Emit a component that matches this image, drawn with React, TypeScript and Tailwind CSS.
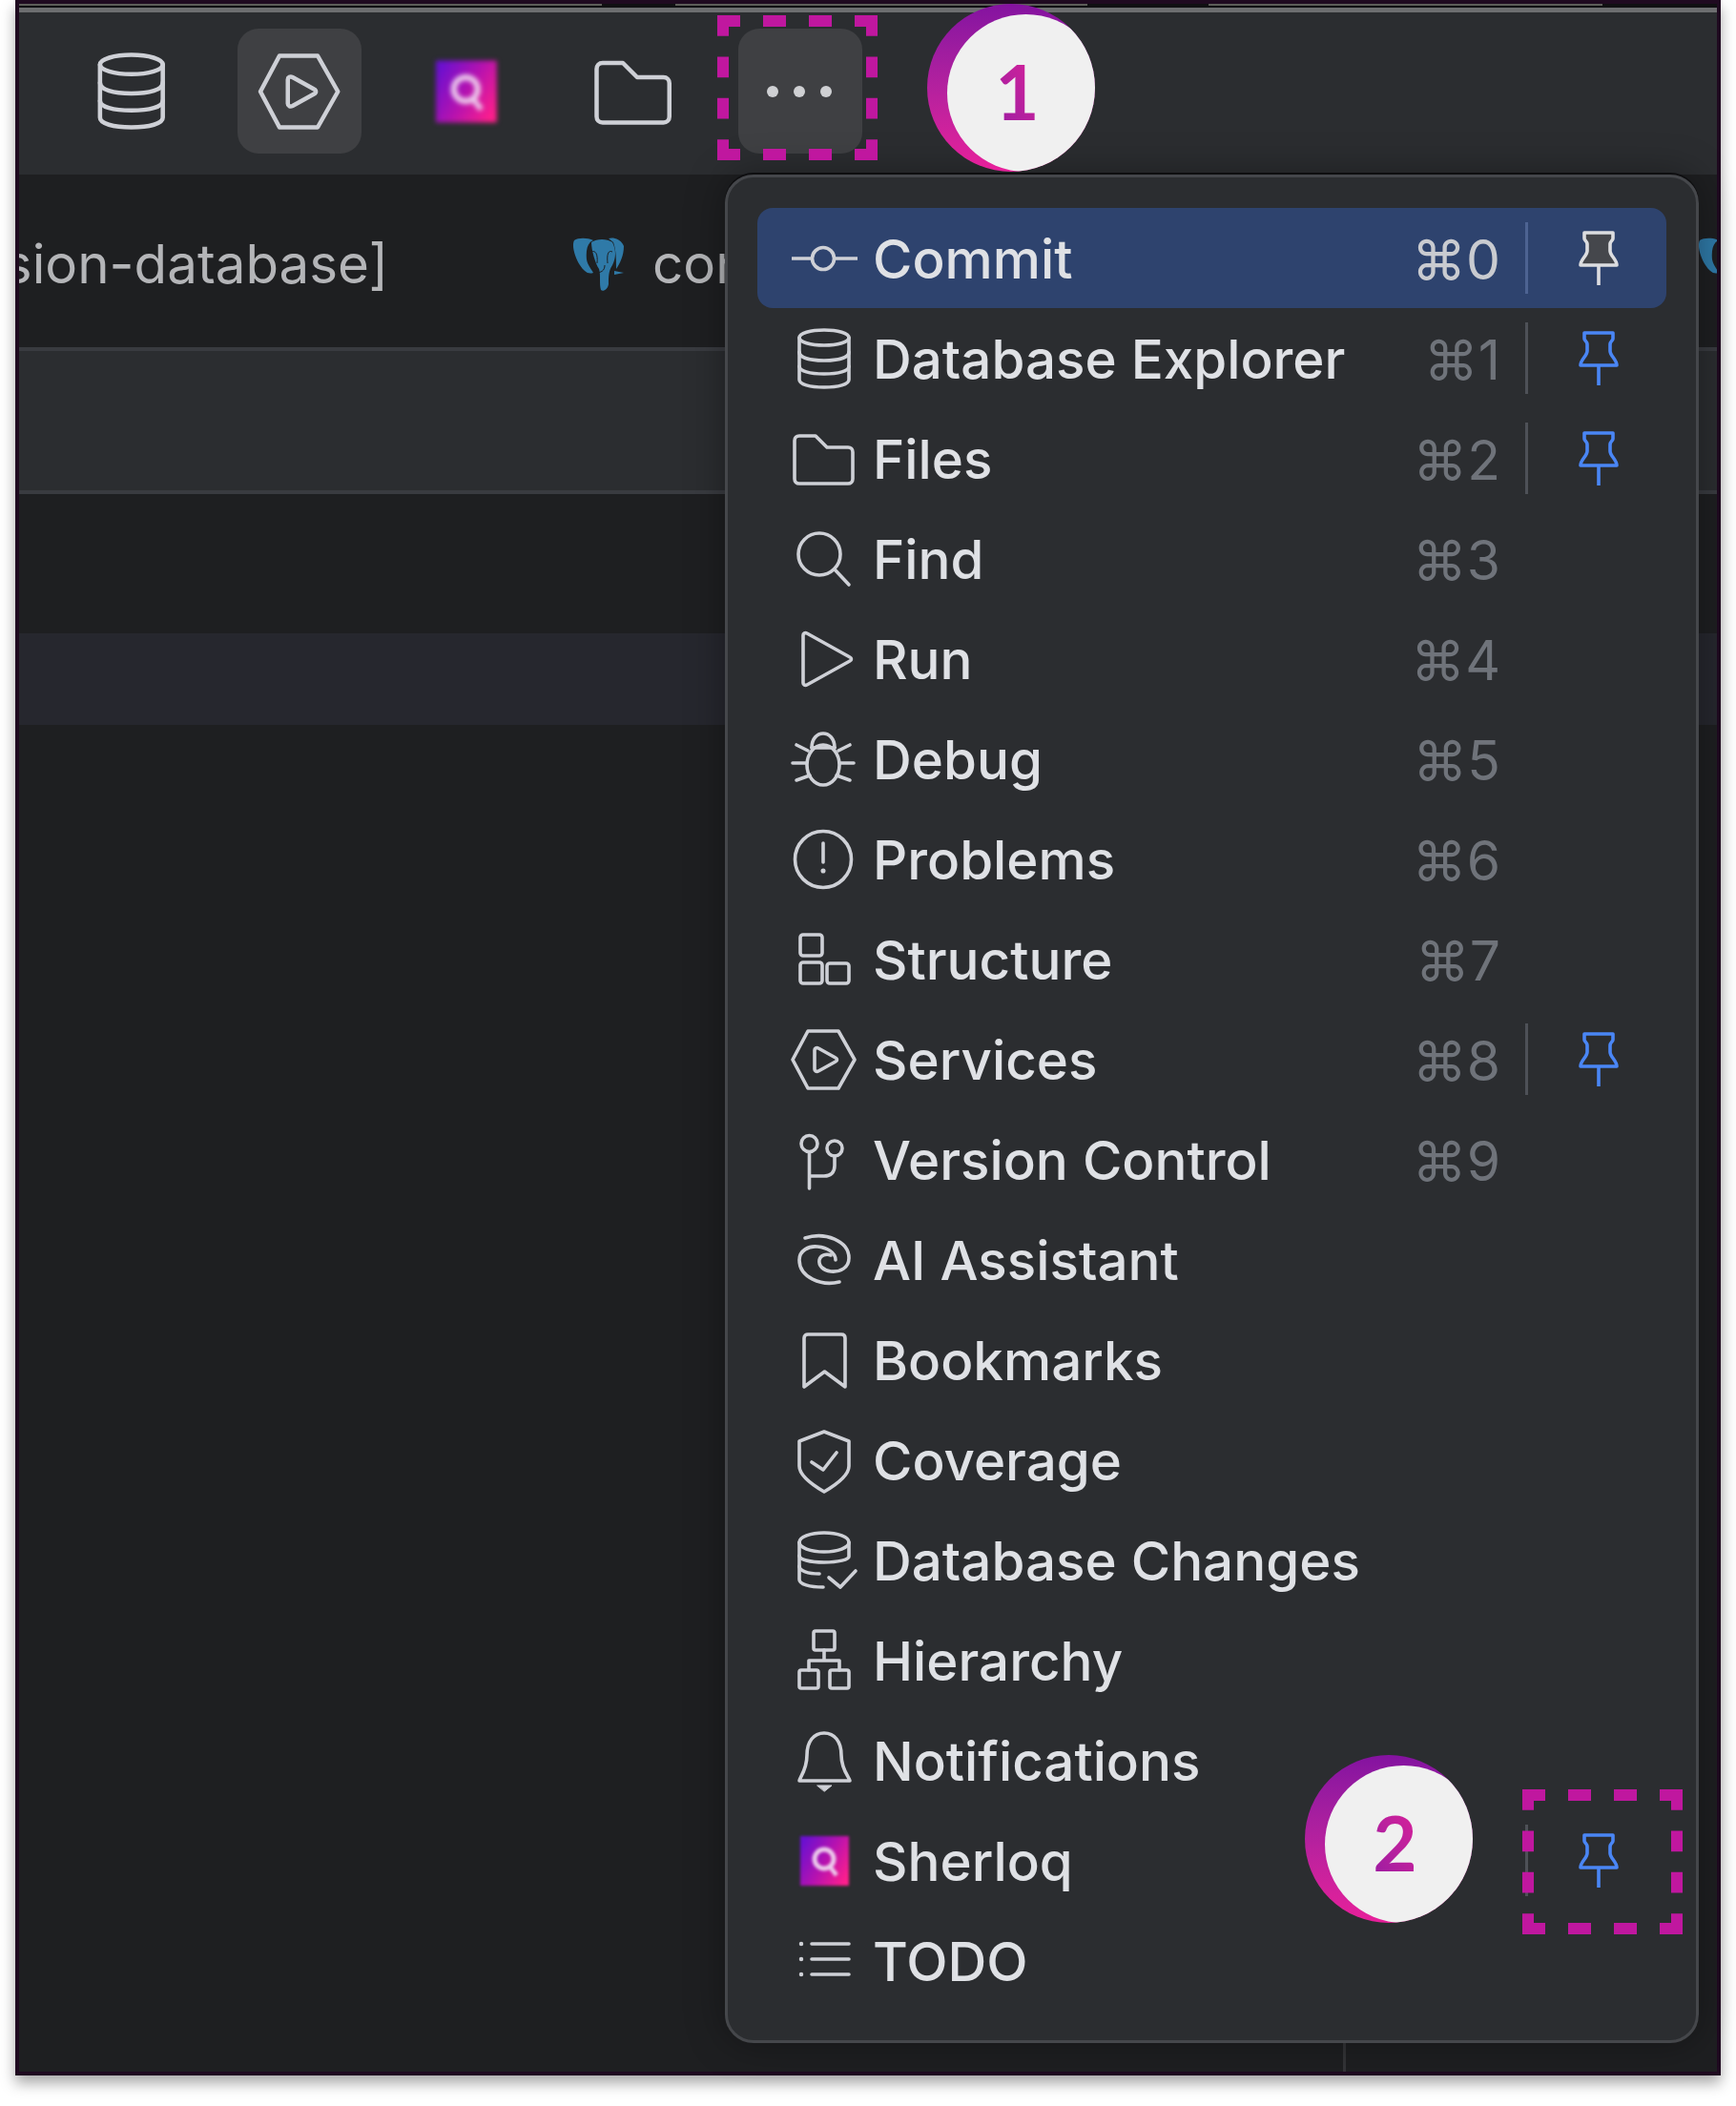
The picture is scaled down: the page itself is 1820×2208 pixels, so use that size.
import React from "react";

const stroke = "#ced0d6";

function Glyph({ children, className = "w-[64px] h-[64px]" }: { children: React.ReactNode; className?: string }) {
  return (
    <svg viewBox="0 0 64 64" fill="none" stroke={stroke} strokeWidth={3.6} strokeLinecap="round" strokeLinejoin="round" overflow="visible" className={className + " shrink-0"}>
      {children}
    </svg>
  );
}

const CommitIcon = () => (
  <Glyph>
    <circle cx="32" cy="32" r="11.5" />
    <path d="M-1 32H20M44 32H68" strokeLinecap="butt" />
  </Glyph>
);
const DbIcon = ({ className }: { className?: string }) => (
  <Glyph className={className}>
    <ellipse cx="33" cy="10" rx="26" ry="8" />
    <path d="M7 10V54C7 59 18 62 33 62C48 62 59 59 59 54V10" />
    <path d="M7 25C7 31 18 34 33 34C48 34 59 31 59 25" />
    <path d="M7 40C7 45 18 48 33 48C48 48 59 45 59 40" />
  </Glyph>
);
const FolderIcon = ({ className }: { className?: string }) => (
  <Glyph className={className}>
    <path d="M2 13C2 10 4 8 7 8H24L36 20H58C61 20 63 22 63 25V53C63 56 61 58 58 58H7C4 58 2 56 2 53Z" />
  </Glyph>
);
const FindIcon = () => (
  <Glyph>
    <circle cx="28" cy="27" r="22" />
    <path d="M44 43L59 59" />
  </Glyph>
);
const RunIcon = () => (
  <Glyph>
    <path d="M11 7C11 5 13 4 15 5L60 30C62 31 62 33 60 34L15 59C13 60 11 59 11 57Z" />
  </Glyph>
);
const DebugIcon = () => (
  <Glyph>
    <ellipse cx="32" cy="38" rx="17" ry="21" />
    <path d="M20 20C20 10 26 5 32 5C38 5 44 10 44 20" />
    <path d="M20 20H44" />
    <path d="M0 36H14M50 36H64M4 17L16 23M60 17L48 23M4 54L18 49M60 54L46 49" />
  </Glyph>
);
const ProblemsIcon = () => (
  <Glyph>
    <circle cx="32" cy="32" r="29.5" />
    <path d="M32 15V35" />
    <circle cx="32" cy="44" r="1.8" fill={stroke} strokeWidth={1.5} />
  </Glyph>
);
const StructureIcon = () => (
  <Glyph>
    <rect x="8" y="6" width="23" height="22" rx="3" />
    <rect x="8" y="35" width="23" height="22" rx="3" />
    <rect x="36" y="36" width="23" height="21" rx="3" />
  </Glyph>
);
const ServicesIcon = ({ className }: { className?: string }) => (
  <Glyph className={className}>
    <path d="M0 32L16 2H48L65 32L48 62H16Z" />
    <path d="M23 22C23 20 25 19 27 20L45 30C47 31 47 33 45 34L27 44C25 45 23 44 23 42Z" />
  </Glyph>
);
const VcsIcon = () => (
  <Glyph>
    <circle cx="17.5" cy="15" r="8.5" />
    <circle cx="44" cy="20" r="8" />
    <path d="M17.5 24V62M44 28V38C44 45 40 49 33 49H17.5" />
  </Glyph>
);
const AiIcon = () => (
  <Glyph>
    <path d="M13 9C34 2 59 12 59 30C59 40 50 45 40 44C32 43 27 38 28 32C29 27 35 25 40 27" />
    <path d="M49 55C30 60 7 50 7 32C7 22 17 17 26 18C36 19 45 24 45 32" />
  </Glyph>
);
const BookmarkIcon = () => (
  <Glyph>
    <path d="M12 60V9C12 6 14 5 16 5H51C53 5 55 6 55 9V60L33.5 44Z" />
  </Glyph>
);
const CoverageIcon = () => (
  <Glyph>
    <path d="M33 2L59 12V38C59 48 45 58 33 65C21 58 7 48 7 38V12Z" />
    <path d="M20 34L32 42L46 24" />
  </Glyph>
);
const DbChangesIcon = () => (
  <Glyph>
    <ellipse cx="33" cy="13" rx="26" ry="10" />
    <path d="M7 13V52C7 57 18 60 32 60" />
    <path d="M59 13V28C59 31 48 34 33 34C18 34 7 31 7 27" />
    <path d="M7 38C7 43 16 46 28 46" />
    <path d="M38 50L50 60L66 43" />
  </Glyph>
);
const HierarchyIcon = () => (
  <Glyph>
    <rect x="22" y="1" width="22" height="20" rx="2" />
    <rect x="7" y="42" width="20" height="19" rx="2" />
    <rect x="39" y="42" width="20" height="19" rx="2" />
    <path d="M33 21V32M17 42V32H49V42" />
  </Glyph>
);
const BellIcon = () => (
  <Glyph>
    <path d="M7 53C7 50 15 42 15 26C15 12 22 3 33 3C44 3 51 12 51 26C51 42 60 50 60 53Z" />
    <path d="M26 58H41L33.5 64Z" fill={stroke} strokeWidth={1} />
  </Glyph>
);
const SherloqIcon = ({ className = "w-[64px] h-[64px] blur-[1.6px]" }: { className?: string }) => (
  <svg viewBox="0 0 64 64" className={className + " shrink-0"}>
    <defs>
      <linearGradient id="sherloq" x1="0" y1="0.2" x2="1" y2="0.8">
        <stop offset="0" stopColor="#6a10d0" />
        <stop offset="0.5" stopColor="#b412b0" />
        <stop offset="1" stopColor="#ff1f8c" />
      </linearGradient>
    </defs>
    <rect x="8" y="6" width="51" height="52" fill="url(#sherloq)" />
    <circle cx="33" cy="30" r="10" fill="none" stroke="#eccbec" strokeWidth="5" />
    <path d="M39 38L46 47" stroke="#eccbec" strokeWidth="4.5" />
  </svg>
);
const TodoIcon = () => (
  <Glyph>
    <path d="M20 14H59M20 30H59M20 46H59" />
    <path d="M9 14V14.1M9 30V30.1M9 46V46.1" strokeWidth={4.5} />
  </Glyph>
);

function Pin({ filled }: { filled?: boolean }) {
  const color = filled ? "#dcdde0" : "#4a86f5";
  return (
    <svg viewBox="0 0 42 58" fill={filled ? "#45474c" : "none"} stroke={color} strokeWidth={3.6} strokeLinejoin="round" className="w-[42px] h-[58px] shrink-0">
      <path d="M6 2H36V8C36 10 33 11 33 14V21C33 26 40 30 40 36H2C2 30 9 26 9 21V14C9 11 6 10 6 8Z" />
      <path d="M21 37V57" />
    </svg>
  );
}

function Elephant() {
  return (
    <svg viewBox="0 0 55 58" className="w-[55px] h-[58px] shrink-0" fill="#2f7aa8" stroke="none">
      <path d="M2 4C6 1 16 1 22 4C16 6 14 14 15 24C16 30 20 34 22 38C16 40 12 36 8 30C3 22-1 10 2 4Z" />
      <path d="M20 6C26 2 36 2 42 6C46 14 46 22 42 30C38 36 38 42 38 50C37 56 32 58 30 56C28 50 30 40 28 34C24 28 20 14 20 6Z" />
      <path d="M38 2C44 0 52 4 54 10C54 20 50 28 46 34C46 26 46 14 43 6Z" />
      <path d="M24 38C30 38 34 36 34 30" fill="none" stroke="#1e1f21" strokeWidth="1" />
      <path d="M20 16C24 14 27 18 26 28M42 16C38 14 36 18 37 28" fill="none" stroke="#1e1f21" strokeWidth="1" />
      <path d="M44 36L54 38L44 40Z" />
    </svg>
  );
}

function DashedBox({ className }: { className: string }) {
  return (
    <svg viewBox="0 0 168 152" fill="none" stroke="#c0179f" strokeWidth={12} className={"absolute w-[168px] h-[152px] " + className}>
      <path d="M0 6H168M0 146H168" strokeDasharray="24 24" />
      <path d="M6 0V152M162 0V152" strokeDasharray="21.72 21.71" />
    </svg>
  );
}

function Badge({ n, className }: { n: string; className: string }) {
  return (
    <div className={"absolute w-[176px] h-[176px] rounded-full overflow-hidden bg-linear-to-b from-[#8412a0] to-[#e81f9a] " + className}>
      <div className="absolute left-[21px] top-[11px] w-[165px] h-[165px] rounded-full bg-[#f0f0f0] flex items-center justify-center pr-[18px] pb-[5px]">
        <span className="font-['Lato',sans-serif] font-bold text-[80px] leading-none bg-linear-to-tr from-[#9a1aa2] to-[#dc1f98] bg-clip-text text-transparent">{n}</span>
      </div>
    </div>
  );
}

type Item = { name: string; icon: React.ReactNode; hot?: string; pin?: boolean };

const items: Item[] = [
  { name: "Commit", icon: <CommitIcon />, hot: "⌘0", pin: true },
  { name: "Database Explorer", icon: <DbIcon />, hot: "⌘1", pin: true },
  { name: "Files", icon: <FolderIcon />, hot: "⌘2", pin: true },
  { name: "Find", icon: <FindIcon />, hot: "⌘3" },
  { name: "Run", icon: <RunIcon />, hot: "⌘4" },
  { name: "Debug", icon: <DebugIcon />, hot: "⌘5" },
  { name: "Problems", icon: <ProblemsIcon />, hot: "⌘6" },
  { name: "Structure", icon: <StructureIcon />, hot: "⌘7" },
  { name: "Services", icon: <ServicesIcon />, hot: "⌘8", pin: true },
  { name: "Version Control", icon: <VcsIcon />, hot: "⌘9" },
  { name: "AI Assistant", icon: <AiIcon /> },
  { name: "Bookmarks", icon: <BookmarkIcon /> },
  { name: "Coverage", icon: <CoverageIcon /> },
  { name: "Database Changes", icon: <DbChangesIcon /> },
  { name: "Hierarchy", icon: <HierarchyIcon /> },
  { name: "Notifications", icon: <BellIcon /> },
  { name: "Sherloq", icon: <SherloqIcon />, pin: true },
  { name: "TODO", icon: <TodoIcon /> },
];

function Row({ item, selected }: { item: Item; selected: boolean }) {
  return (
    <div className={"h-[105px] flex items-center pl-[37px] rounded-[16px] " + (selected ? "bg-[#2e436e]" : "")}>
      {item.icon}
      <span className="ml-[20px] pt-[3px] flex-1 text-[56.5px] font-medium leading-none text-[#dfe1e5] whitespace-nowrap">{item.name}</span>
      <span className={"pt-[3px] text-[57px] leading-none whitespace-nowrap font-['Inter','DejaVu_Sans',sans-serif] " + (selected ? "text-[#c9cbd0]" : "text-[#6f737a]")}>{item.hot}</span>
      <div className="w-[174px] shrink-0 flex items-center pl-[26px]">
        {item.pin && (
          <>
            <div className={"w-[3px] h-[75px] shrink-0 " + (selected ? "bg-[#4d6392]" : "bg-[#4e5157]")} />
            <div className="ml-[53px]">
              <Pin filled={selected} />
            </div>
          </>
        )}
      </div>
    </div>
  );
}

function ToolButton({ active, children }: { active?: boolean; children: React.ReactNode }) {
  return <div className={"w-[130px] h-[131px] rounded-[22px] flex items-center justify-center shrink-0 " + (active ? "bg-[#3f4043]" : "")}>{children}</div>;
}

export default function App() {
  return (
    <div className="w-[1820px] h-[2208px] bg-white overflow-hidden font-['Inter',sans-serif]">
      <div className="relative ml-[16px] w-[1788px] h-[2176px] border-x-4 border-b-4 border-[#1f0a20] flex flex-col shadow-[0_8px_14px_rgba(0,0,0,0.35)] bg-[#1e1f21]">
        <div className="h-[4px] bg-[#1f0a20] shrink-0" />
        <div className="h-[2px] bg-[#101012] shrink-0 flex">
          <div className="w-[611px] bg-[#5c5c58]" />
          <div className="w-[77px]" />
          <div className="w-[432px] bg-[#5c5c58]" />
          <div className="w-[127px]" />
          <div className="w-[413px] bg-[#5c5c58]" />
        </div>
        <div className="h-[2px] bg-[#101012] shrink-0" />
        <div className="h-[5px] bg-[#6d6e70] shrink-0" />
        <div className="h-[170px] shrink-0 bg-[#2b2d30] flex items-start pt-[17px] pl-[54px] gap-[45px]">
          <ToolButton>
            <DbIcon className="w-[81px] h-[81px] mr-[5px]" />
          </ToolButton>
          <ToolButton active>
            <ServicesIcon className="w-[80px] h-[80px] mr-[2px]" />
          </ToolButton>
          <ToolButton>
            <SherloqIcon className="w-[80px] h-[80px] mr-[4px] blur-[2.4px]" />
          </ToolButton>
          <ToolButton>
            <FolderIcon className="w-[80px] h-[80px] mr-[3px]" />
          </ToolButton>
          <ToolButton active>
            <div className="flex gap-[16px] mr-[3px]">
              <div className="w-[12px] h-[12px] rounded-full bg-[#cfd0d3]" />
              <div className="w-[12px] h-[12px] rounded-full bg-[#cfd0d3]" />
              <div className="w-[12px] h-[12px] rounded-full bg-[#cfd0d3]" />
            </div>
          </ToolButton>
        </div>
        <div className="h-[181px] shrink-0 flex items-center overflow-hidden text-[56.5px] leading-none text-[#b4b5b8] pt-[7px]">
          <div className="w-[387px] shrink-0 flex justify-end overflow-hidden">
            <span className="whitespace-nowrap">sion-database]</span>
          </div>
          <div className="ml-[193px]">
            <Elephant />
          </div>
          <span className="ml-[29px] w-[1096px] shrink-0">con</span>
          <Elephant />
        </div>
        <div className="h-[154px] shrink-0 bg-[#2b2d30] border-y-4 border-[#393b40]" />
        <div className="h-[146px] shrink-0" />
        <div className="h-[96px] shrink-0 bg-[#26272e]" />
        <div className="flex-1 flex flex-col justify-end">
          <div className="h-[30px] pl-[1388px]">
            <div className="w-[3px] h-full bg-[#333437]" />
          </div>
        </div>

        <div className="absolute left-[740px] top-[183px] w-[1021px] h-[1959px] rounded-[30px] border-[3px] border-[#45474b] bg-[#2b2d30] pt-[32px] px-[31px] shadow-[0_-2px_0_#0e0e10,0_0_40px_rgba(0,0,0,0.35)]">
          {items.map((it, i) => (
            <Row key={it.name} item={it} selected={i === 0} />
          ))}
        </div>

        <DashedBox className="left-[732px] top-[16px]" />
        <DashedBox className="left-[1576px] top-[1876px]" />
        <Badge n="1" className="left-[952px] top-[4px]" />
        <Badge n="2" className="left-[1348px] top-[1840px]" />
      </div>
    </div>
  );
}
